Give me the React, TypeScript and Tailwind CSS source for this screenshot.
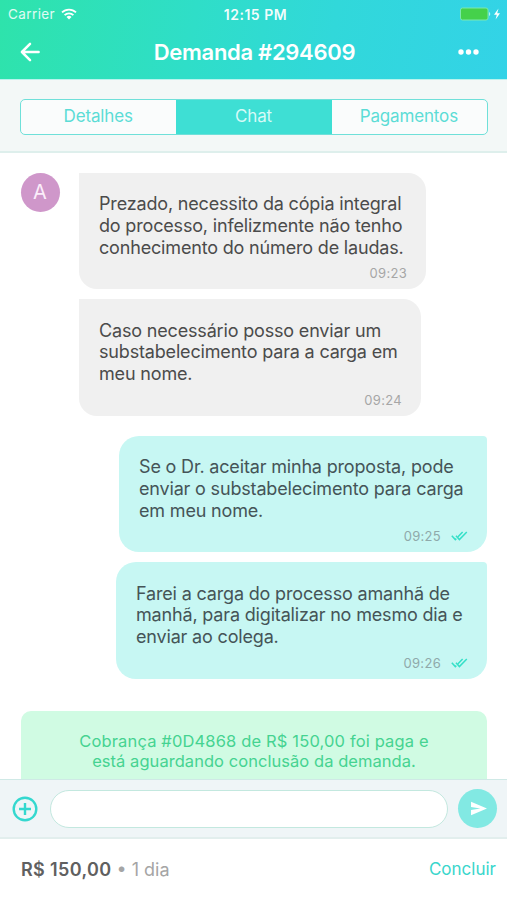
import { useState } from 'react'

type Message = {
  id: number
  lines: string[]
  time: string
  bubble: string
}

const tabs = ['Detalhes', 'Chat', 'Pagamentos']

const received: Message[] = [
  {
    id: 1,
    lines: [
      'Prezado, necessito da cópia integral',
      'do processo, infelizmente não tenho',
      'conhecimento do número de laudas.',
    ],
    time: '09:23',
    bubble: 'w-[347px]',
  },
  {
    id: 2,
    lines: [
      'Caso necessário posso enviar um',
      'substabelecimento para a carga em',
      'meu nome.',
    ],
    time: '09:24',
    bubble: 'w-[342px]',
  },
]

const sent: Message[] = [
  {
    id: 3,
    lines: [
      'Se o Dr. aceitar minha proposta, pode',
      'enviar o substabelecimento para carga',
      'em meu nome.',
    ],
    time: '09:25',
    bubble: 'w-[368px]',
  },
  {
    id: 4,
    lines: [
      'Farei a carga do processo amanhã de',
      'manhã, para digitalizar no mesmo dia e',
      'enviar ao colega.',
    ],
    time: '09:26',
    bubble: 'w-[371px]',
  },
]

function StatusBar() {
  return (
    <div className="grid h-7 grid-cols-3 items-center pl-2 pr-1.5 text-[13px] text-white">
      <div className="flex items-center gap-1.5">
        <span className="text-[13.5px] tracking-[0.4px] text-white/85">Carrier</span>
        <svg width="16" height="12" viewBox="0 0 16 12" fill="none" stroke="white" strokeWidth="1.8">
          <path d="M1 4.4a10 10 0 0 1 14 0" />
          <path d="M3.6 7.2a6.2 6.2 0 0 1 8.8 0" />
          <path d="M8 11.6 5.5 9a3.5 3.5 0 0 1 5 0z" fill="white" stroke="none" />
        </svg>
      </div>
      <span className="pl-0.5 text-center text-[14px] font-semibold tracking-[0.5px] text-white/95">12:15 PM</span>
      <div className="flex items-center justify-end">
        <svg width="41" height="14" viewBox="0 0 41 14">
          <rect x="0.5" y="1" width="27.5" height="12" rx="2" fill="#45d14b" stroke="#7be9b0" strokeWidth="1" />
          <path d="M29 5v4a2.2 2.2 0 0 0 0-4z" fill="#b5f3ef" />
          <path d="M38.5 1.5 34 7.8h2.8L35.6 12.5 40 6.2h-2.8z" fill="white" />
        </svg>
      </div>
    </div>
  )
}

function Header() {
  return (
    <header className="h-[79px] shrink-0 bg-linear-[100deg,#2ee3ab_0%,#2fdec8_38%,#31d8da_65%,#33d3e7_100%]">
      <StatusBar />
      <div className="grid h-12 grid-cols-[60px_1fr_60px] items-center pl-5 pr-[18px] text-white">
        <svg width="21" height="20" viewBox="0 0 22 20" fill="none" stroke="white" strokeWidth="2.6" strokeLinecap="round" strokeLinejoin="round">
          <path d="M10.5 1.5 2 10l8.5 8.5M2 10h17.5" />
        </svg>
        <h1 className="text-center text-[22px] font-semibold tracking-[-0.3px] whitespace-nowrap">Demanda #294609</h1>
        <svg className="mr-[10px] justify-self-end" width="21" height="6" viewBox="0 0 21 6" fill="white">
          <circle cx="3" cy="3" r="2.7" />
          <circle cx="10.5" cy="3" r="2.7" />
          <circle cx="18" cy="3" r="2.7" />
        </svg>
      </div>
    </header>
  )
}

function DoubleCheck() {
  return (
    <svg width="17" height="10" viewBox="0 0 17 10" fill="none" stroke="#35e0c8" strokeWidth="1.5">
      <path d="M.8 4.8 4.3 8.6l1-1M6.8 6 11.6 1" />
      <path d="M5 4.8 8.4 8.6 15.8 1" />
    </svg>
  )
}

function Bubble({ message, own }: { message: Message; own?: boolean }) {
  return (
    <div
      className={`flex h-[116.5px] flex-col pt-[20.5px] pr-[19px] pl-5 ${message.bubble} ${
        own
          ? 'rounded-[20px] rounded-tr-[4px] bg-[#c7f7f3]'
          : 'rounded-[18px] rounded-tl-none bg-[#f0f0f0]'
      }`}
    >
      {message.lines.map((line) => (
        <p
          key={line}
          className={`text-[18px] leading-[21.8px] tracking-[-0.17px] whitespace-nowrap ${own ? 'text-[#455457]' : 'text-[#4b4b4b]'}`}
        >
          {line}
        </p>
      ))}
      <div className="mt-[7px] flex items-center justify-end gap-2.5 text-[13px] leading-4 tracking-[0.3px]">
        <span className={own ? 'text-[#8fa9aa]' : 'text-[#a6a6a6]'}>{message.time}</span>
        {own && <DoubleCheck />}
      </div>
    </div>
  )
}

export default function App() {
  const [activeTab, setActiveTab] = useState('Chat')
  const [text, setText] = useState('')

  return (
    <div className="flex h-[900px] w-[507px] flex-col overflow-hidden bg-white font-['Inter','Liberation_Sans',sans-serif]">
      <Header />

      {/* Tabs */}
      <div className="h-[74px] shrink-0 border-t border-b-2 border-t-[#b9f4ee] border-b-[#deefec] bg-[#f3f8f7] pt-[18.5px] pr-[19px] pl-5">
        <div className="flex h-9 overflow-hidden rounded-[5px] border-[1.5px] border-[#6fe0d9] bg-[#fafcfc]">
          {tabs.map((tab) => (
            <button
              key={tab}
              onClick={() => setActiveTab(tab)}
              className={`flex-1 pt-px pr-px text-[17px] tracking-[-0.15px] ${
                activeTab === tab ? 'bg-[#3edfd4] text-[#d6faf7]' : 'text-[#5cdcd6]'
              }`}
            >
              {tab}
            </button>
          ))}
        </div>
      </div>

      {/* Conversation */}
      <main className="min-h-0 flex-1 overflow-hidden px-5 pt-[19.5px]">
        <div className="flex gap-[19.5px]">
          <div className="ml-[0.5px] flex size-[39px] shrink-0 items-center justify-center rounded-full bg-[#cf97ca] text-[20px] text-[#fbeefa]">
            A
          </div>
          <div className="flex flex-col gap-2.5">
            {received.map((message) => (
              <Bubble key={message.id} message={message} />
            ))}
          </div>
        </div>
        <div className="mt-5 flex flex-col items-end gap-2.5">
          {sent.map((message) => (
            <Bubble key={message.id} message={message} own />
          ))}
        </div>
        <div className="mt-8 ml-px h-24 rounded-[10px] bg-[#d0fbe3] pt-5 text-center text-[16.5px] leading-[20.5px] text-[#45d391]">
          <p className="tracking-[0.15px]">Cobrança #0D4868 de R$ 150,00 foi paga e</p>
          <p className="tracking-[0.05px]">está aguardando conclusão da demanda.</p>
        </div>
      </main>

      {/* Message input */}
      <div className="flex h-[60px] shrink-0 items-center border-t border-b-2 border-t-[#cfe9e6] border-b-[#e2eeed] bg-[#eff5f7] pl-3 pr-2.5">
        <button className="pt-px">
          <svg width="26" height="26" viewBox="0 0 26 26" fill="none" stroke="#34d8cf" strokeWidth="2.4">
            <circle cx="13" cy="13" r="11.3" />
            <path d="M13 7v12M7 13h12" />
          </svg>
        </button>
        <input
          value={text}
          onChange={(e) => setText(e.target.value)}
          className="ml-3 h-[38px] min-w-0 flex-1 rounded-full border border-[#c3e8df] bg-white px-4 text-[17px] outline-none"
        />
        <button className="ml-2.5 flex size-[39px] items-center justify-center rounded-full bg-[#82e9e3]">
          <svg className="ml-[3px]" width="18" height="15" viewBox="0 0 19 16" fill="white">
            <path d="M1 .8 18 8 1 15.2V9.6L11 8 1 6.4z" />
          </svg>
        </button>
      </div>

      {/* Price */}
      <footer className="flex h-[61px] shrink-0 items-center justify-between pl-[21px] pr-[11px]">
        <p className="text-[18px] text-[#a5a5a5]">
          <strong className="font-semibold tracking-[0.35px] text-[#606060]">R$ 150,00</strong> • 1 dia
        </p>
        <button className="text-[17px] text-[#3ad6cc]">Concluir</button>
      </footer>
    </div>
  )
}
